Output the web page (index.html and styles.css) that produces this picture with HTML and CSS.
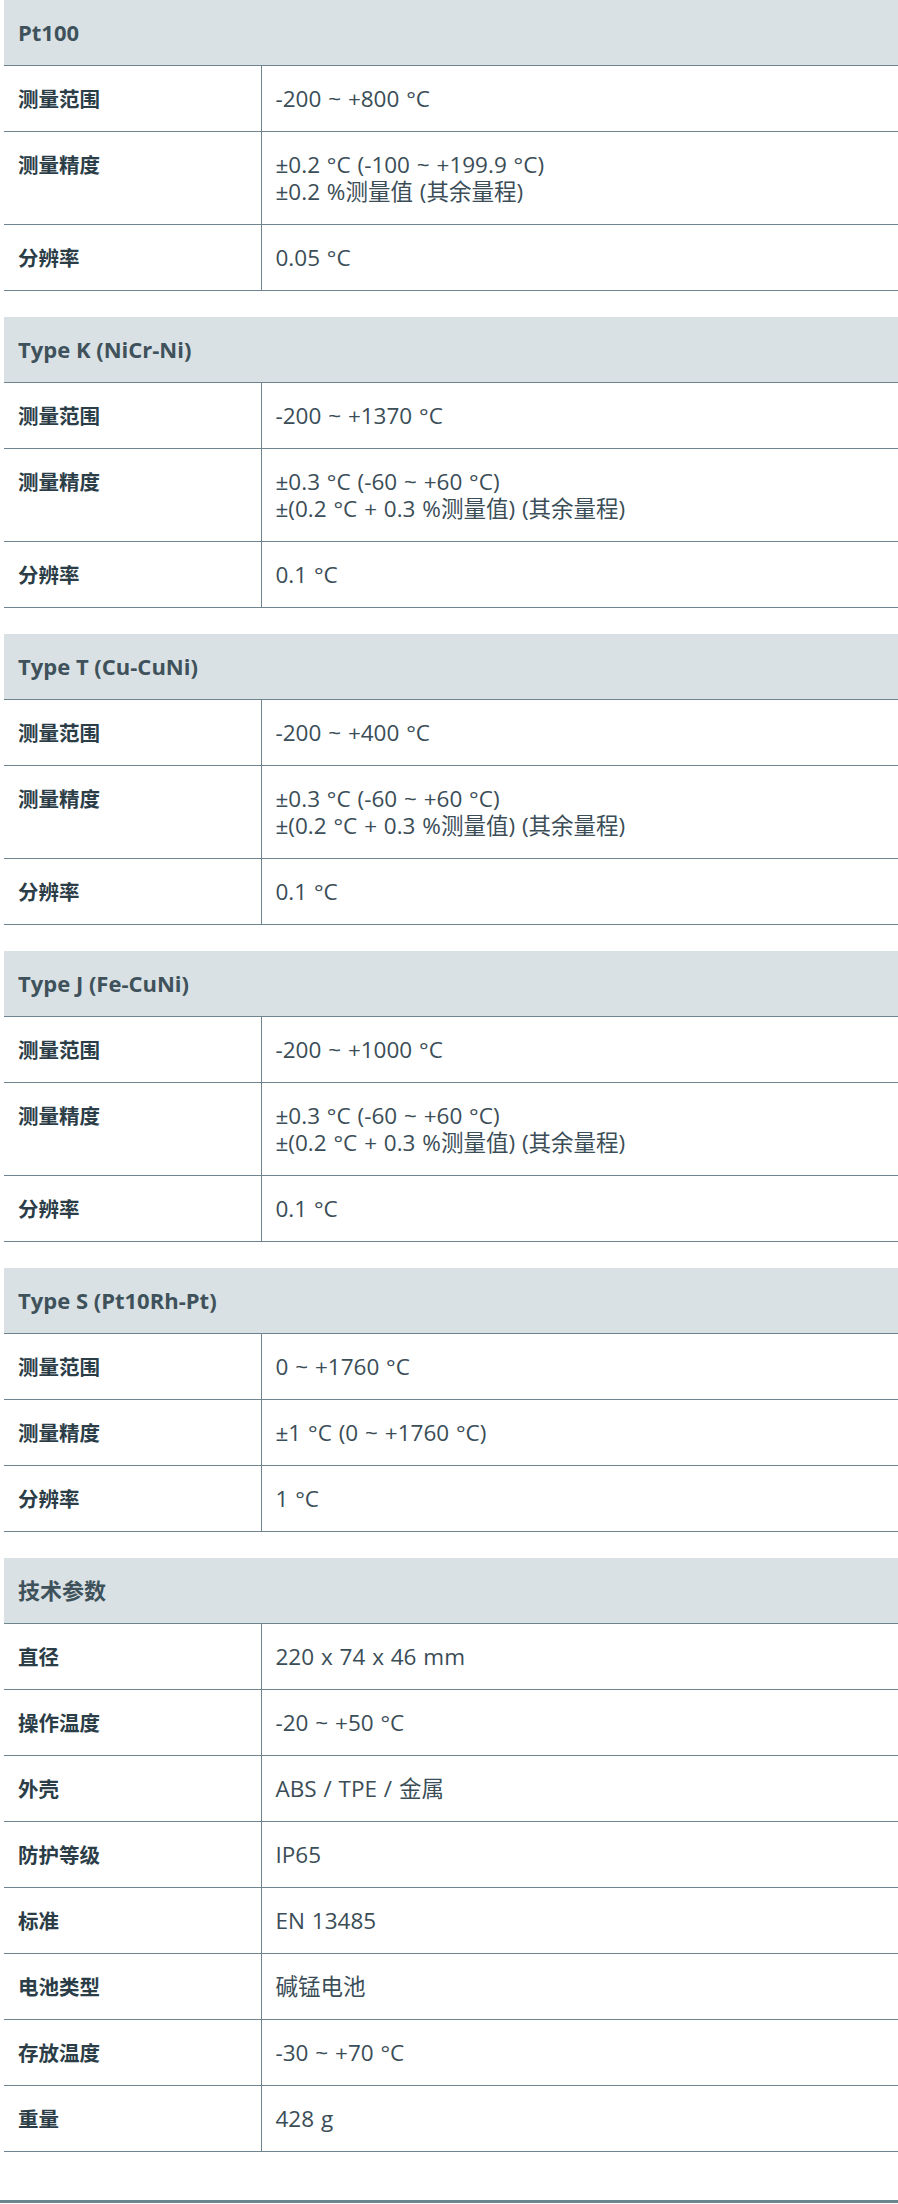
FILE: index.html
```html
<!DOCTYPE html>
<html lang="zh-CN">
<head>
<meta charset="utf-8">
<title>技术参数</title>
<link rel="stylesheet" href="styles.css">
</head>
<body>
<div class="page">
  <table class="spec">
    <colgroup><col class="c-lbl"><col class="c-val"></colgroup>
    <tr><th colspan="2">Pt100</th></tr>
    <tr><td class="lbl">测量范围</td><td class="val">-200 ~ +800 °C</td></tr>
    <tr><td class="lbl">测量精度</td><td class="val">±0.2 °C (-100 ~ +199.9 °C)<br>±0.2 %测量值 (其余量程)</td></tr>
    <tr><td class="lbl">分辨率</td><td class="val">0.05 °C</td></tr>
  </table>
  <table class="spec">
    <colgroup><col class="c-lbl"><col class="c-val"></colgroup>
    <tr><th colspan="2">Type K (NiCr-Ni)</th></tr>
    <tr><td class="lbl">测量范围</td><td class="val">-200 ~ +1370 °C</td></tr>
    <tr><td class="lbl">测量精度</td><td class="val">±0.3 °C (-60 ~ +60 °C)<br>±(0.2 °C + 0.3 %测量值) (其余量程)</td></tr>
    <tr><td class="lbl">分辨率</td><td class="val">0.1 °C</td></tr>
  </table>
  <table class="spec">
    <colgroup><col class="c-lbl"><col class="c-val"></colgroup>
    <tr><th colspan="2">Type T (Cu-CuNi)</th></tr>
    <tr><td class="lbl">测量范围</td><td class="val">-200 ~ +400 °C</td></tr>
    <tr><td class="lbl">测量精度</td><td class="val">±0.3 °C (-60 ~ +60 °C)<br>±(0.2 °C + 0.3 %测量值) (其余量程)</td></tr>
    <tr><td class="lbl">分辨率</td><td class="val">0.1 °C</td></tr>
  </table>
  <table class="spec">
    <colgroup><col class="c-lbl"><col class="c-val"></colgroup>
    <tr><th colspan="2">Type J (Fe-CuNi)</th></tr>
    <tr><td class="lbl">测量范围</td><td class="val">-200 ~ +1000 °C</td></tr>
    <tr><td class="lbl">测量精度</td><td class="val">±0.3 °C (-60 ~ +60 °C)<br>±(0.2 °C + 0.3 %测量值) (其余量程)</td></tr>
    <tr><td class="lbl">分辨率</td><td class="val">0.1 °C</td></tr>
  </table>
  <table class="spec">
    <colgroup><col class="c-lbl"><col class="c-val"></colgroup>
    <tr><th colspan="2">Type S (Pt10Rh-Pt)</th></tr>
    <tr><td class="lbl">测量范围</td><td class="val">0 ~ +1760 °C</td></tr>
    <tr><td class="lbl">测量精度</td><td class="val">±1 °C (0 ~ +1760 °C)</td></tr>
    <tr><td class="lbl">分辨率</td><td class="val">1 °C</td></tr>
  </table>
  <table class="spec">
    <colgroup><col class="c-lbl"><col class="c-val"></colgroup>
    <tr><th colspan="2">技术参数</th></tr>
    <tr><td class="lbl">直径</td><td class="val">220 x 74 x 46 mm</td></tr>
    <tr><td class="lbl">操作温度</td><td class="val">-20 ~ +50 °C</td></tr>
    <tr><td class="lbl">外壳</td><td class="val">ABS / TPE / 金属</td></tr>
    <tr><td class="lbl">防护等级</td><td class="val">IP65</td></tr>
    <tr><td class="lbl">标准</td><td class="val">EN 13485</td></tr>
    <tr><td class="lbl">电池类型</td><td class="val">碱锰电池</td></tr>
    <tr><td class="lbl">存放温度</td><td class="val">-30 ~ +70 °C</td></tr>
    <tr><td class="lbl">重量</td><td class="val">428 g</td></tr>
  </table>
</div>
<div class="footer-line"></div>
</body>
</html>
```

FILE: styles.css
```css
html, body {
  margin: 0;
  padding: 0;
  background: #ffffff;
}

body {
  font-family: "Open Sans", "Noto Sans CJK SC", sans-serif;
  color: #3b4d57;
  width: 898px;
  overflow: hidden;
}

.page {
  padding-left: 4px;
}

.spec {
  width: 894px;
  border-collapse: collapse;
  border-spacing: 0;
  margin: 0 0 26px 0;
  table-layout: fixed;
}

.c-lbl {
  width: 257px;
}

.spec th {
  background: #d9e1e4;
  color: #3f525b;
  font-family: "Open Sans", "Noto Sans CJK SC", sans-serif;
  font-weight: 700;
  font-size: 22px;
  line-height: 27px;
  text-align: left;
  padding: 19px 14px 19px 14px;
  border-bottom: 1px solid #6e8590;
}

.spec td {
  padding: 19px 14px;
  line-height: 27px;
  vertical-align: top;
  border-bottom: 1px solid #6e8590;
}

.spec .lbl {
  border-right: 1px solid #6e8590;
  font-family: "Noto Sans CJK SC", "Open Sans", sans-serif;
  font-weight: 700;
  font-size: 20.5px;
  color: #2b3d47;
}

.spec .val {
  font-size: 22.5px;
  word-spacing: 1px;
  color: #3b4d57;
}

.footer-line {
  margin-top: 48px;
  border-top: 3px solid #6b858f;
}
```
